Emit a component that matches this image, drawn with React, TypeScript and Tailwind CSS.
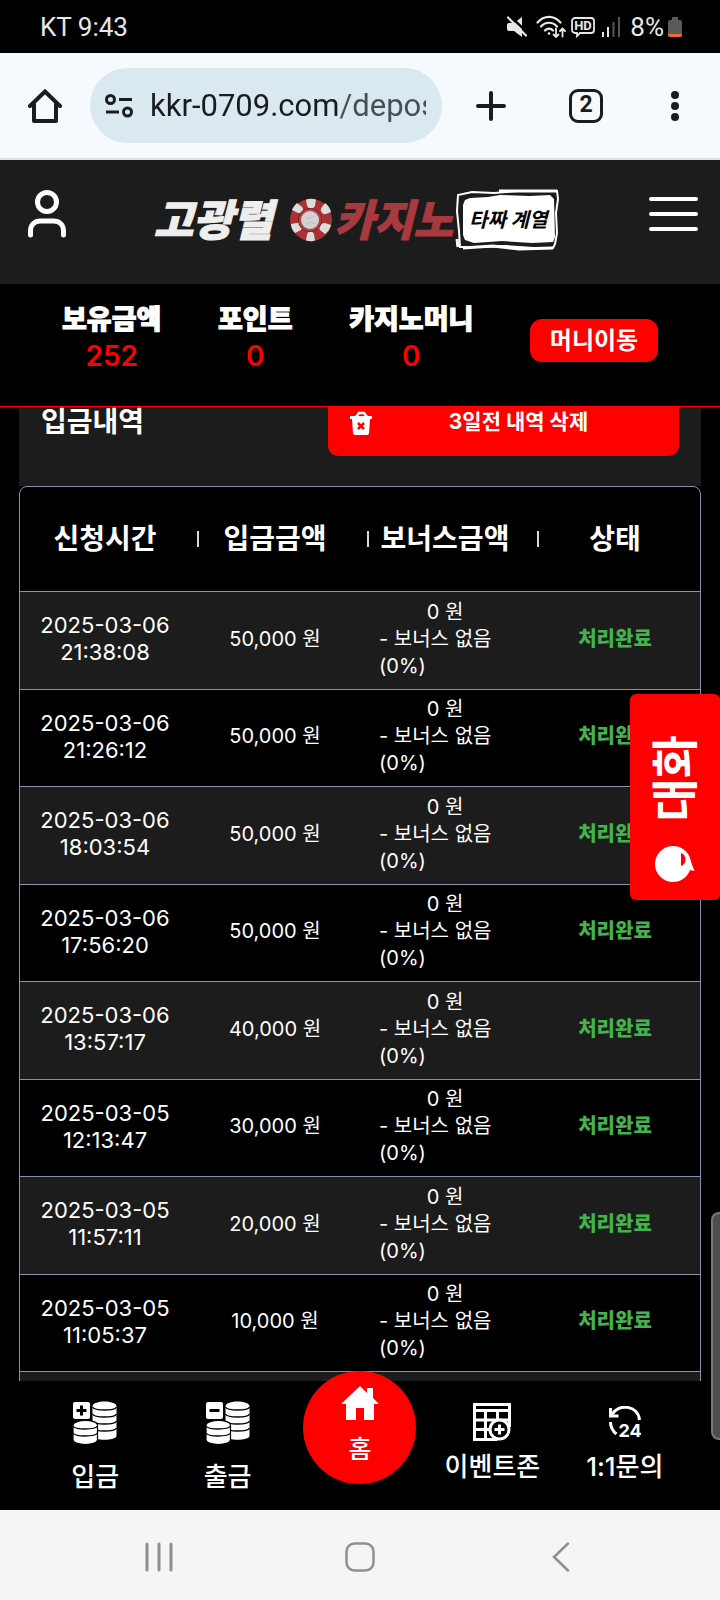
import type { ReactNode } from 'react';

type Deposit = { date: string; time: string; amount: string };

const deposits: Deposit[] = [
  { date: '2025-03-06', time: '21:38:08', amount: '50,000' },
  { date: '2025-03-06', time: '21:26:12', amount: '50,000' },
  { date: '2025-03-06', time: '18:03:54', amount: '50,000' },
  { date: '2025-03-06', time: '17:56:20', amount: '50,000' },
  { date: '2025-03-06', time: '13:57:17', amount: '40,000' },
  { date: '2025-03-05', time: '12:13:47', amount: '30,000' },
  { date: '2025-03-05', time: '11:57:11', amount: '20,000' },
  { date: '2025-03-05', time: '11:05:37', amount: '10,000' },
];

const columns = ['신청시간', '입금금액', '보너스금액', '상태'];

const balances = [
  { label: '보유금액', value: '252' },
  { label: '포인트', value: '0' },
  { label: '카지노머니', value: '0' },
];

function StatusBar() {
  return (
    <div className="flex h-[53px] shrink-0 items-center justify-between bg-black pl-10 pr-[38px] pt-px font-[Roboto,sans-serif] text-[26px] text-[#e8e8e8]">
      <span>KT 9:43</span>
      <div className="flex items-center">
        <svg width="20" height="22" viewBox="0 0 20 22" className="mr-[9px]" aria-hidden>
          <path d="M2 7h5L15 1v20l-8-6H2a2 2 0 0 1-2-2V9a2 2 0 0 1 2-2z" fill="#e8e8e8" />
          <path d="M3 0l19 18" stroke="#000" strokeWidth="2.500" />
          <path d="M1 1.500l18 18" stroke="#e8e8e8" strokeWidth="2.200" strokeLinecap="round" />
        </svg>
        <svg width="30" height="24" viewBox="0 0 30 24" className="mr-[5px]" fill="none" stroke="#e8e8e8" strokeWidth="2.200" strokeLinecap="round" aria-hidden>
          <path d="M1.500 7.500C8 0 18 0 24.500 7.500M5 11.500c4.500-5 11.500-5 16 0M9 15.500c2.300-2.500 5.700-2.500 8 0" />
          <circle cx="13" cy="18.500" r="1.300" fill="#e8e8e8" stroke="none" />
          <path d="M20 13.500v8M17.500 19.500l2.500 2.500 2.500-2.500M26.500 21.500v-8M24 16l2.500-2.500L29 16" strokeWidth="1.800" />
        </svg>
        <svg width="24" height="22" viewBox="0 0 24 22" className="mr-[7px]" aria-hidden>
          <path
            d="M4 2h16a3 3 0 0 1 3 3v9a3 3 0 0 1-3 3H9l-3 3v-3H4a3 3 0 0 1-3-3V5a3 3 0 0 1 3-3z"
            fill="none"
            stroke="#e8e8e8"
            strokeWidth="1.800"
          />
          <text x="12" y="14" textAnchor="middle" fontSize="13" fontWeight="700" fill="#e8e8e8">HD</text>
        </svg>
        <svg width="18" height="20" viewBox="0 0 18 20" className="mr-[10px]" aria-hidden>
          <path d="M0 15h2v5H0zM5 10h2v10H5z" fill="#e8e8e8" />
          <path d="M10.500 5h2v15h-2zM16 0h2v20h-2z" fill="#555" />
        </svg>
        <span>8%</span>
        <svg width="14" height="20" viewBox="0 0 14 20" className="ml-1" aria-hidden>
          <path d="M4 0h6v3h2a2 2 0 0 1 2 2v12H0V5a2 2 0 0 1 2-2h2z" fill="#5a5a5a" />
          <path d="M0 17h14v1a2 2 0 0 1-2 2H2a2 2 0 0 1-2-2z" fill="#f0683c" />
        </svg>
      </div>
    </div>
  );
}

function BrowserBar() {
  return (
    <div className="flex h-[107px] shrink-0 items-center border-b-2 border-[#dde3e6] bg-[#f6f9fe] pl-7 pr-[35px] text-[#191d20]">
      <button type="button" aria-label="Home">
        <svg width="34" height="34" viewBox="0 0 34 34" fill="none" stroke="currentColor" strokeWidth="4" strokeLinejoin="round" strokeLinecap="round" aria-hidden>
          <path d="M2 17L17 2.500 32 17" strokeLinejoin="miter" />
          <path d="M6 15v17h22V15" />
        </svg>
      </button>
      <div className="ml-7 mr-[34px] flex h-[75px] min-w-0 flex-1 items-center rounded-full bg-[#dae8f0] pl-[15px] pr-4">
        <svg width="28" height="24" viewBox="0 0 28 24" className="mr-[17px] shrink-0" fill="none" stroke="currentColor" strokeWidth="3" aria-hidden>
          <circle cx="5.500" cy="5.500" r="4" />
          <path d="M14 5.500h13M1 18h13" />
          <circle cx="22.500" cy="18" r="4" />
        </svg>
        <input
          type="text"
          aria-label="URL"
          defaultValue="kkr-0709.com/depos"
          className="min-w-0 flex-1 bg-[linear-gradient(90deg,#191d20_190px,#484e52_190px)] bg-clip-text pt-0.5 font-[Roboto,sans-serif] text-[31px] text-transparent outline-none"
        />
      </div>
      <button type="button" aria-label="New tab">
        <svg width="30" height="30" viewBox="0 0 30 30" stroke="currentColor" strokeWidth="4" strokeLinecap="round" aria-hidden>
          <path d="M15 2v26M2 15h26" />
        </svg>
      </button>
      <button type="button" className="ml-[63px] flex size-[34px] items-center justify-center rounded-[9px] border-[3px] border-current font-[Roboto,sans-serif] text-[23px] font-bold">
        2
      </button>
      <button type="button" aria-label="Menu" className="ml-[62px]">
        <svg width="20" height="32" viewBox="0 0 20 32" fill="currentColor" aria-hidden>
          <circle cx="10" cy="5" r="4" />
          <circle cx="10" cy="16" r="4" />
          <circle cx="10" cy="27" r="4" />
        </svg>
      </button>
    </div>
  );
}

function Chip() {
  return (
    <svg width="44" height="44" viewBox="0 0 44 44" aria-hidden>
      <circle cx="22" cy="22" r="21" fill="#a83238" />
      <g fill="#dcdcdc">
        <path d="M17 1.500c3-1 7-1 10 0l-1 6c-1 4-7 4-8 0z" />
        <path d="M17 42.500c3 1 7 1 9 0l-1-6c-1-4-6-4-7 0z" />
        <path d="M3 12c1-3 3-5 5-7l5 4c3 3-1 7-4 6z" />
        <path d="M36 5c3 2 5 5 6 9l-5 2c-4 1-7-4-4-7z" />
        <path d="M2 26c0 4 2 7 4 9l6-3c3-3 0-8-4-7z" />
        <path d="M42 27c-1 4-3 7-6 9l-5-4c-2-4 1-7 5-7z" />
      </g>
      <circle cx="21" cy="22" r="12" fill="#822228" />
      <circle cx="21" cy="22" r="11" fill="#b5444a" />
      <circle cx="21" cy="22" r="9" fill="#d2d2d2" />
      <path d="M16 19l4 2 5-3M17 26l5-2 4 2" stroke="#c2c2c2" fill="none" />
    </svg>
  );
}

function Logo() {
  return (
    <a href="#" className="flex items-center text-[43px] font-black italic leading-[60px]">
      <span className="text-[#eeeeee] [-webkit-text-stroke:1px]">고광렬</span>
      <span className="ml-4 mr-0.5">
        <Chip />
      </span>
      <span className="text-[#a83a3f] [-webkit-text-stroke:1px]">카지노</span>
      <span className="relative ml-0.5 flex h-[62px] w-[106px] items-center justify-center text-[20px] font-bold text-black">
        <svg width="106" height="62" viewBox="0 0 106 62" className="absolute inset-0" fill="none" aria-hidden>
          <path d="M8 16l2-5 5-2 18-1 12-2 30 1 20-1 4 4 1 38-2 5-21 1-30-2-28 2-9-3-2-5z" fill="#fff" />
          <path d="M5 58L4 42 2 22 3 6l14-3 22 1 24-2 39 0 1 8-2 14 1 20-2 11-2 4-20 0-28-2-24 1z" stroke="#fff" strokeWidth="2" />
          <path d="M8 59l30-2 26 3 34-1M44 2l58 0M2 50l1 8" stroke="#fff" strokeWidth="3" />
        </svg>
        <span className="relative">타짜 계열</span>
      </span>
    </a>
  );
}

function SiteHeader() {
  return (
    <header className="flex h-[124px] shrink-0 items-start justify-between bg-[#1c1c1c] pl-7 pr-[22px] pt-[29px]">
      <button type="button" aria-label="내 정보" className="pt-px">
        <svg width="38" height="48" viewBox="0 0 38 48" fill="none" stroke="#fff" strokeWidth="5" strokeLinecap="round" aria-hidden>
          <circle cx="19" cy="12" r="9.500" />
          <path d="M2.500 45v-4c0-6 4-10 10-10h13c6 0 10 4 10 10v4" />
        </svg>
      </button>
      <Logo />
      <button type="button" aria-label="메뉴" className="pt-2">
        <svg width="49" height="34" viewBox="0 0 49 34" stroke="#fff" strokeWidth="4" strokeLinecap="round" aria-hidden>
          <path d="M2 2h45M2 17h45M2 32h45" />
        </svg>
      </button>
    </header>
  );
}

function BalanceBar() {
  return (
    <section className="flex h-[123px] shrink-0 items-start justify-between border-b border-[#ff0000] bg-black px-[62px] pt-[18px]">
      {balances.map((b) => (
        <div key={b.label} className="text-center leading-9">
          <div className="text-[27px] font-black [-webkit-text-stroke:1px]">{b.label}</div>
          <div className="text-[28px] font-semibold text-[#ff0000]">{b.value}</div>
        </div>
      ))}
      <button type="button" className="mt-[17px] h-[43px] w-32 rounded-xl bg-[#ff0000] text-[24px] font-bold leading-10">
        머니이동
      </button>
    </section>
  );
}

function TrashIcon() {
  return (
    <svg width="22" height="24" viewBox="0 0 22 24" className="absolute left-[22px] top-[24px]" aria-hidden>
      <path d="M6 6l3-4h5l3 4" fill="none" stroke="#fff" strokeWidth="2.500" />
      <path d="M0 5h22v3h-2l-1 14a2 2 0 0 1-2 2H5a2 2 0 0 1-2-2L2 8H0z" fill="#fff" />
      <path d="M8 12l6 6M14 12l-6 6" stroke="#f00" strokeWidth="2.500" />
    </svg>
  );
}

function DepositTable() {
  return (
    <div className="overflow-hidden rounded-t-lg border border-[#8792ae] bg-black">
      <table className="w-full table-fixed border-collapse text-center">
        <thead>
          <tr className="h-[104px]">
            {columns.map((name, i) => (
              <th key={name} className="relative p-0 text-[28px] font-bold">
                {i > 0 && <span className="absolute left-[7px] top-1/2 h-4 w-[2px] -translate-y-1/2 bg-[#d8d8d8]" />}
                {name}
              </th>
            ))}
          </tr>
        </thead>
        <tbody>
          {deposits.map((d) => (
            <tr key={d.date + d.time} className="border-t border-[#8792ae] text-[20px] leading-[27px] odd:h-[98px] odd:bg-[#1c1c1c] even:h-[97px]">
              <td className="p-0 pb-0.5 text-[22px]">
                {d.date}
                <br />
                {d.time}
              </td>
              <td className="p-0 pb-0.5">{d.amount} 원</td>
              <td className="p-0 pb-0.5">
                <div>0 원</div>
                <div className="pl-[19px] text-left">
                  - 보너스 없음
                  <br />
                  (0%)
                </div>
              </td>
              <td className="p-0 pb-0.5 font-black text-[#43b34c]">처리완료</td>
            </tr>
          ))}
          <tr className="h-[98px] border-t border-[#8792ae] bg-[#1c1c1c]">
            <td colSpan={4} />
          </tr>
        </tbody>
      </table>
    </div>
  );
}

function CoinsIcon({ minus = false }: { minus?: boolean }) {
  return (
    <svg width="44" height="44" viewBox="0 0 44 44" aria-hidden>
      <rect x="0" y="1" width="17" height="17" rx="2" fill="#fff" />
      <path d={minus ? 'M3.500 9.500h10' : 'M3.500 9.500h10M8.500 4.500v10'} stroke="#000" strokeWidth="3" />
      <path d="M19.500 5v30c1 5 23 5 24 0V5c-1-6-23-6-24 0z" fill="#fff" />
      <path d="M19.500 6c2 4 22 4 24 0M19.500 13c2 4 22 4 24 0M19.500 20c2 4 22 4 24 0M19.500 27c2 4 22 4 24 0" fill="none" stroke="#000" strokeWidth="1.300" />
      <path d="M0 24v15c1 6 24 6 24.500 0V24c-.5-6-23.500-6-24.500 0z" fill="#fff" stroke="#000" strokeWidth="1.200" />
      <path d="M0 25c2 4 22 4 24.500 0M0 32c2 4 22 4 24.500 0" fill="none" stroke="#000" strokeWidth="1.300" />
    </svg>
  );
}

function EventIcon() {
  return (
    <svg width="38" height="38" viewBox="0 0 38 38" fill="none" stroke="#fff" strokeWidth="3" aria-hidden>
      <path d="M36.500 24V1.500h-35v35h23M1.500 7.500h35M1.500 17h35M1.500 26.500h16M12.500 8v29M24.500 8v10" />
      <circle cx="26.500" cy="26.500" r="9.500" fill="#000" />
      <path d="M26.500 21.500v10M21.500 26.500h10" />
    </svg>
  );
}

function SupportIcon() {
  return (
    <svg width="32" height="32" viewBox="0 0 32 32" fill="none" aria-hidden>
      <path d="M30.500 14C29 -1 9 -3 2.500 9M1.500 2v8h8M1.500 16c0 5 2 9 6 12" stroke="#fff" strokeWidth="3" />
      <text x="21" y="31" textAnchor="middle" fontSize="18" fontWeight="700" fill="#fff">24</text>
    </svg>
  );
}

function NavItem({ icon, label, low = false }: { icon: ReactNode; label: string; low?: boolean }) {
  return (
    <a href="#" className={low ? 'flex flex-col items-center pt-5' : 'flex flex-col items-center pt-[22px]'}>
      {icon}
      <span className={low ? 'mt-3 whitespace-nowrap text-[26px] font-medium leading-10' : 'mt-1.5 whitespace-nowrap text-[26px] font-medium leading-10'}>
        {label}
      </span>
    </a>
  );
}

function BottomNav() {
  return (
    <nav className="relative grid h-[129px] shrink-0 grid-cols-5 bg-black px-[29px]">
      <NavItem icon={<CoinsIcon />} label="입금" low />
      <NavItem icon={<CoinsIcon minus />} label="출금" low />
      <a href="#" className="-mt-[10px] flex size-[113px] flex-col items-center justify-self-center rounded-full bg-[#ff0000] pt-[15px]">
        <svg width="38" height="34" viewBox="0 0 38 34" fill="#fff" aria-hidden>
          <path d="M19 0l7 7V2h6v10l6 6h-5v16h-10V22h-8v12H5V18H0z" />
        </svg>
        <span className="mt-[13px] text-[25px] font-medium leading-8">홈</span>
      </a>
      <NavItem icon={<EventIcon />} label="이벤트존" />
      <NavItem icon={<span className="flex h-[38px] items-center"><SupportIcon /></span>} label="1:1문의" />
    </nav>
  );
}

function SystemNav() {
  return (
    <div className="grid h-[90px] shrink-0 grid-cols-3 place-items-center bg-[#f5f5f5] px-[58px] pt-[3px] text-[#8f8f8f]">
      <button type="button" aria-label="최근 앱">
        <svg width="28" height="30" viewBox="0 0 28 30" stroke="currentColor" strokeWidth="3" strokeLinecap="round" aria-hidden>
          <path d="M2 2v26M14 2v26M26 2v26" />
        </svg>
      </button>
      <button type="button" aria-label="홈 화면">
        <svg width="30" height="30" viewBox="0 0 30 30" fill="none" stroke="currentColor" strokeWidth="2.500" aria-hidden>
          <rect x="1.500" y="1.500" width="27" height="27" rx="8" />
        </svg>
      </button>
      <button type="button" aria-label="뒤로">
        <svg width="18" height="30" viewBox="0 0 18 30" fill="none" stroke="currentColor" strokeWidth="2.500" strokeLinecap="round" aria-hidden>
          <path d="M16 1.500L2 15l14 13.500" />
        </svg>
      </button>
    </div>
  );
}

function ChatTab() {
  return (
    <button type="button" className="fixed right-0 top-[694px] flex h-[206px] w-[90px] flex-col items-center rounded-md bg-[#ff0000] pt-[41px]">
      <span className="rotate-180 text-[47px] font-bold leading-[60px] [text-orientation:sideways] [writing-mode:vertical-rl]">대화</span>
      <svg width="40" height="38" viewBox="0 0 40 38" className="mt-6" aria-hidden>
        <circle cx="18" cy="19" r="18" fill="#fff" />
        <path d="M33 9l6.500 17L30 24z" fill="#fff" />
        <path d="M26 8c6 2 6 11 0 13z" fill="#f00" />
      </svg>
    </button>
  );
}

export default function App() {
  return (
    <div className="flex h-screen flex-col overflow-hidden bg-black font-[Inter,'Noto_Sans_CJK_KR',sans-serif] text-white">
      <StatusBar />
      <BrowserBar />
      <SiteHeader />
      <BalanceBar />
      <main className="min-h-0 flex-1 overflow-hidden px-[19px]">
        {/* scrolled slightly under the balance bar */}
        <div className="-mt-5 flex items-start justify-between bg-[#1c1c1c] px-[22px] pb-[30px]">
          <h2 className="mt-5 text-[28px] font-bold leading-[30px]">입금내역</h2>
          <button type="button" className="relative h-[69px] w-[351px] rounded-[10px] bg-[#ff0000] pl-[30px] text-[21px] font-bold">
            <TrashIcon />
            3일전 내역 삭제
          </button>
        </div>
        <DepositTable />
      </main>
      <BottomNav />
      <SystemNav />
      <ChatTab />
      <div className="fixed right-0 top-[1212px] h-[228px] w-[9px] rounded-l-lg border-y-2 border-l-2 border-[#777] bg-[#4d4d4d]" />
    </div>
  );
}
